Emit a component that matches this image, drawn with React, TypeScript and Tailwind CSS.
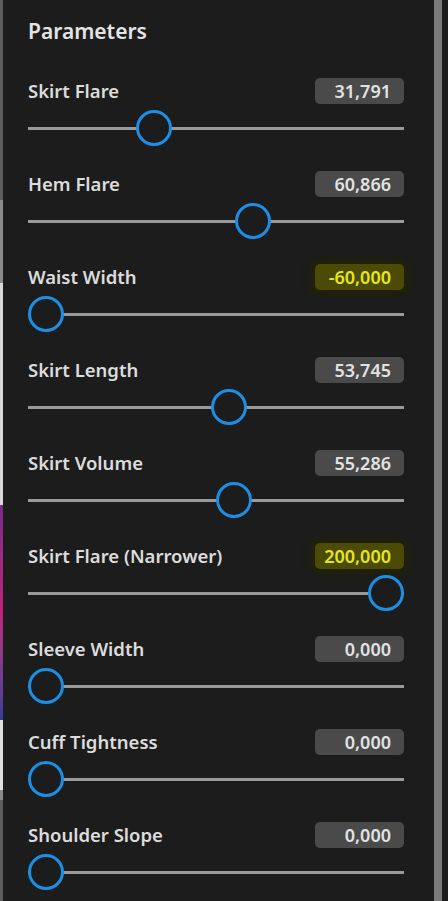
import React from "react";

type Param = { label: string; value: number; text: string; warn?: boolean };

const params: Param[] = [
  { label: "Skirt Flare", value: 31.791, text: "31,791" },
  { label: "Hem Flare", value: 60.866, text: "60,866" },
  { label: "Waist Width", value: -60, text: "-60,000", warn: true },
  { label: "Skirt Length", value: 53.745, text: "53,745" },
  { label: "Skirt Volume", value: 55.286, text: "55,286" },
  { label: "Skirt Flare (Narrower)", value: 200, text: "200,000", warn: true },
  { label: "Sleeve Width", value: 0, text: "0,000" },
  { label: "Cuff Tightness", value: 0, text: "0,000" },
  { label: "Shoulder Slope", value: 0, text: "0,000" },
];

// Slider 0..100, out-of-range values stay pinned to the ends
function Slider({ value }: { value: number }) {
  const f = Math.min(1, Math.max(0, value / 100));
  return (
    <div className="relative h-9 w-full">
      <div className="absolute left-0 right-0 top-[17px] h-[3px] bg-[#9a9a9a]" />
      <div
        className="absolute top-0 h-9 w-9 rounded-full border-[3px] border-[#1b8fe6] bg-[#1c1c1c]"
        style={{ left: `${f * 340}px` }}
      />
    </div>
  );
}

function Row({ p }: { p: Param }) {
  return (
    <div className="flex flex-col">
      <div className="flex h-[26px] items-center justify-between">
        <span className="text-[18.5px] font-semibold leading-none text-[#dcdcdc]">{p.label}</span>
        <span
          className={
            p.warn
              ? "flex h-[26px] w-[89px] items-center justify-end rounded-[5px] bg-[#4b4b06] pr-[13px] text-[18px] font-semibold leading-none text-[#e6e61c] shadow-[0_0_6px_5px_rgba(34,34,6,0.95)]"
              : "flex h-[26px] w-[89px] items-center justify-end rounded-[5px] bg-[#4a4a4a] pr-[13px] text-[18px] font-semibold leading-none text-[#e2e2e2]"
          }
        >
          {p.text}
        </span>
      </div>
      <div className="mt-[6px]">
        <Slider value={p.value} />
      </div>
    </div>
  );
}

export default function App() {
  return (
    <div
      className="flex h-[901px] w-[448px] overflow-hidden bg-[#1c1c1c]"
      style={{ fontFamily: '"Noto Sans", "Open Sans", sans-serif' }}
    >
      <div className="flex w-[3px] flex-col">
        <div className="h-[200px] bg-[#5c5c5c]" />
        <div className="h-[83px] bg-[#8a8a8a]" />
        <div className="h-[222px] bg-[#d8d8d8]" />
        <div className="h-[215px] bg-gradient-to-b from-[#7a2a8a] via-[#c02080] to-[#3a3a9a]" />
        <div className="h-[70px] bg-[#e0e0e0]" />
        <div className="h-[10px] bg-[#8a8a8a]" />
        <div className="flex-1 bg-[#5c5c5c]" />
      </div>
      <div className="flex flex-1 flex-col pl-[25px] pr-[30px] pt-[16px]">
        <h2 className="h-[30px] text-[21px] font-semibold leading-[30px] text-[#e4e4e4]">Parameters</h2>
        <div className="mt-[32px] flex flex-col gap-[25px]">
          {params.map((p) => (
            <Row key={p.label} p={p} />
          ))}
        </div>
      </div>
      <div className="w-[8px] bg-[#7a7a7a]" />
      <div className="w-[6px] bg-[#1c1c1c]" />
    </div>
  );
}
